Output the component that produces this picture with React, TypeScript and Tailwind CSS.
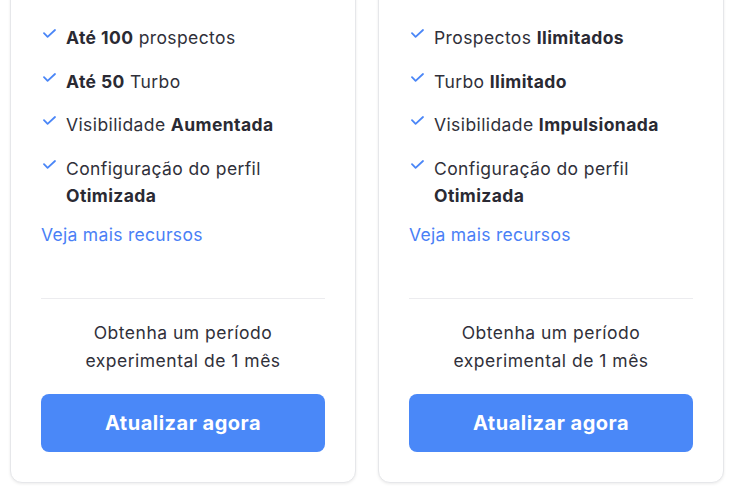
type Feature = { parts: { text: string; bold?: boolean }[] };

const plans: Feature[][] = [
  [
    { parts: [{ text: 'Até 100', bold: true }, { text: ' prospectos' }] },
    { parts: [{ text: 'Até 50', bold: true }, { text: ' Turbo' }] },
    { parts: [{ text: 'Visibilidade ' }, { text: 'Aumentada', bold: true }] },
    { parts: [{ text: 'Configuração do perfil ' }, { text: 'Otimizada', bold: true }] },
  ],
  [
    { parts: [{ text: 'Prospectos ' }, { text: 'Ilimitados', bold: true }] },
    { parts: [{ text: 'Turbo ' }, { text: 'Ilimitado', bold: true }] },
    { parts: [{ text: 'Visibilidade ' }, { text: 'Impulsionada', bold: true }] },
    { parts: [{ text: 'Configuração do perfil ' }, { text: 'Otimizada', bold: true }] },
  ],
];

function CheckMark() {
  return (
    <svg width="13" height="9" viewBox="0 0 13 9" fill="none" className="mt-[5px] ml-[2px] shrink-0">
      <path d="M1 4.2 L4.6 7.8 L12 1" stroke="#4a86f7" strokeWidth="1.8" strokeLinecap="round" strokeLinejoin="round" />
    </svg>
  );
}

function PlanCard({ features }: { features: Feature[] }) {
  return (
    <div className="w-[346px] shrink-0 rounded-xl border border-[#e6e7ea] bg-white px-[30px] pt-[39px] pb-[30px] shadow-[0_1px_3px_rgba(0,0,0,0.08)]">
      <ul className="flex flex-col gap-[16.5px]">
        {features.map((f, i) => (
          <li key={i} className="flex items-start gap-[10px]">
            <CheckMark />
            <span className="max-w-[225px] text-[17.5px] leading-[27px] tracking-[0.4px] text-[#30303a]">
              {f.parts.map((p, j) => (
                <span key={j} className={p.bold ? 'font-bold text-[#2a2a33]' : ''}>
                  {p.text}
                </span>
              ))}
            </span>
          </li>
        ))}
      </ul>
      <a className="mt-[12px] block text-[17.5px] leading-[27px] tracking-[0.3px] text-[#4a7ff6]">Veja mais recursos</a>
      <div className="mt-[50px] h-px bg-[#ececef]" />
      <p className="mt-[20px] text-center text-[17.5px] leading-[28px] tracking-[0.5px] text-[#30303a]">
        Obtenha um período
        <br />
        experimental de 1 mês
      </p>
      <button className="mt-[19px] flex h-[58px] w-full items-center justify-center rounded-lg bg-[#4a88f8] text-[20px] font-bold tracking-[0.5px] text-white">
        Atualizar agora
      </button>
    </div>
  );
}

export default function App() {
  return (
    <div className="h-[490px] w-[730px] overflow-hidden bg-white font-['Inter',sans-serif]">
      <div className="-mt-[16px] flex gap-[22px] pl-[10px]">
        {plans.map((features, i) => (
          <PlanCard key={i} features={features} />
        ))}
      </div>
    </div>
  );
}
